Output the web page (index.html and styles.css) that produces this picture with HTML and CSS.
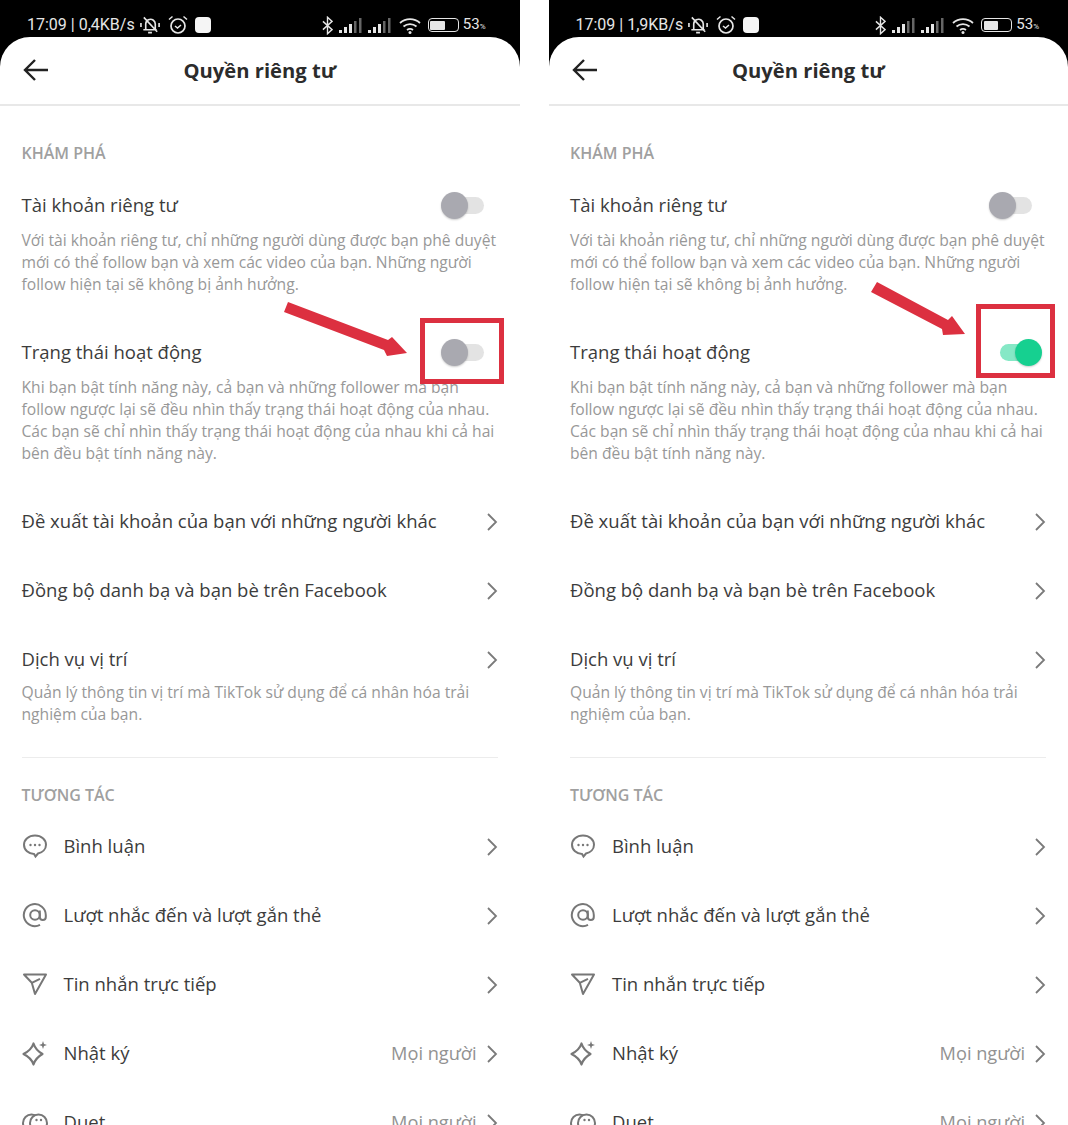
FILE: index.html
```html
<!DOCTYPE html>
<html lang="vi">
<head>
    <meta charset="UTF-8">
    <meta name="viewport" content="width=device-width, initial-scale=1.0">
    <title>Quyền riêng tư</title>
    <link rel="stylesheet" href="styles.css">
</head>
<body>
    <svg class="icon-defs" width="0" height="0">
        <symbol id="i-chevron" viewBox="0 0 12 20"><path d="M2 2l8 8-8 8" fill="none" stroke="#7a7a7a" stroke-width="1.8"/></symbol>
        <symbol id="i-back" viewBox="0 0 26 24"><path d="M25 12H2M12 2L2 12l10 10" fill="none" stroke="#222" stroke-width="2.4"/></symbol>
        <symbol id="i-comment" viewBox="0 0 26 26"><path d="M13 2.500C6.600 2.500 2 6.600 2 11.800S6.600 21 12 21l1.500 2.500 2.500-3c4.600-1 8-4.500 8-8.700C24 6.600 19.400 2.500 13 2.500z" fill="none" stroke="#777" stroke-width="2"/><circle cx="8.500" cy="12" r="1.200" fill="#777"/><circle cx="13" cy="12" r="1.200" fill="#777"/><circle cx="17.500" cy="12" r="1.200" fill="#777"/></symbol>
        <symbol id="i-at" viewBox="0 0 26 26"><circle cx="13" cy="13" r="4.800" fill="none" stroke="#777" stroke-width="2"/><path d="M17.800 8.500v6.500a3 3 0 0 0 6 0v-2A11 11 0 1 0 18 22.800" fill="none" stroke="#777" stroke-width="2"/></symbol>
        <symbol id="i-send" viewBox="0 0 26 24"><path d="M2 2.500h22L13 22 9.800 10.800zM9.800 10.800L18 6.800" fill="none" stroke="#777" stroke-width="2" stroke-linejoin="round"/></symbol>
        <symbol id="i-spark" viewBox="0 0 26 26"><path d="M11.500 3.500Q13.500 10 20.500 14 13.500 18 11.500 24.500 9.500 18 1.500 14 9.500 10 11.500 3.500z" fill="none" stroke="#777" stroke-width="2.200" stroke-linejoin="round"/><path d="M21 1l1 3 3 1-3 1-1 3-1-3-3-1 3-1z" fill="#777"/></symbol>
        <symbol id="i-duet" viewBox="0 0 26 26"><circle cx="9.500" cy="14" r="8.500" fill="none" stroke="#777" stroke-width="2"/><circle cx="16.500" cy="14" r="8.500" fill="#fff" stroke="#777" stroke-width="2"/><circle cx="14.500" cy="11" r="1.200" fill="#777"/><circle cx="19" cy="11" r="1.200" fill="#777"/></symbol>
        <symbol id="i-mute" viewBox="0 0 22 20"><path d="M6 15V9a5 5 0 0 1 8-4 5 5 0 0 1 2 4v6zM3.500 15h14M8.500 18h4M4 2l14 15M1 8v4M20 8v4" fill="none" stroke="#e6e6e6" stroke-width="1.700"/></symbol>
        <symbol id="i-alarm" viewBox="0 0 20 20"><circle cx="10" cy="11" r="7" fill="none" stroke="#e6e6e6" stroke-width="1.700"/><path d="M7 11l2.500 2L13 10M1 4.500L4.500 1.500M19 4.500L15.500 1.500" fill="none" stroke="#e6e6e6" stroke-width="1.500"/></symbol>
        <symbol id="i-bt" viewBox="0 0 12 20"><path d="M1 5.500l10 9L6 19V1l5 4.500-10 9" fill="none" stroke="#e6e6e6" stroke-width="1.500"/></symbol>
        <symbol id="i-signal" viewBox="0 0 23 15"><rect x="0" y="12" width="3" height="3" fill="#e6e6e6"/><rect x="5" y="9" width="3" height="6" fill="#e6e6e6"/><rect x="10" y="6" width="3" height="9" fill="#e6e6e6"/><rect x="15" y="3" width="2.500" height="12" fill="#666"/><rect x="20" y="0" width="2.500" height="15" fill="#666"/></symbol>
        <symbol id="i-wifi" viewBox="0 0 23 17"><path d="M1 6a15 15 0 0 1 20 0M4.500 9.500a10 10 0 0 1 13 0M8 13a5 5 0 0 1 6 0" fill="none" stroke="#e6e6e6" stroke-width="1.800"/><circle cx="11" cy="15.500" r="1.500" fill="#e6e6e6"/></symbol>
    </svg>

    <div class="screens">
        <div class="phone">
            <div class="status-bar">
                <div class="status-group">
                    <span class="status-text">17:09 | 0,4KB/s</span>
                    <svg class="st-mute"><use href="#i-mute"/></svg>
                    <svg class="st-alarm"><use href="#i-alarm"/></svg>
                    <span class="st-square"></span>
                </div>
                <div class="status-group">
                    <svg class="st-bt"><use href="#i-bt"/></svg>
                    <svg class="st-signal"><use href="#i-signal"/></svg>
                    <svg class="st-signal"><use href="#i-signal"/></svg>
                    <svg class="st-wifi"><use href="#i-wifi"/></svg>
                    <span class="st-battery"><span class="st-battery-fill"></span></span>
                    <span class="status-text status-pct">53<small>%</small></span>
                </div>
            </div>
            <div class="sheet">
                <div class="top-bar">
                    <svg class="back-icon"><use href="#i-back"/></svg>
                    <h1>Quyền riêng tư</h1>
                </div>
                <div class="content">
                    <div class="section-title">KHÁM PHÁ</div>
                    <div class="row toggle-row first-row">
                        <span class="row-label">Tài khoản riêng tư</span>
                        <span class="toggle"></span>
                    </div>
                    <p class="desc">Với tài khoản riêng tư, chỉ những người dùng được bạn phê duyệt<br>mới có thể follow bạn và xem các video của bạn. Những người<br>follow hiện tại sẽ không bị ảnh hưởng.</p>
                    <div class="row toggle-row">
                        <span class="row-label">Trạng thái hoạt động</span>
                        <span class="toggle"></span>
                    </div>
                    <p class="desc">Khi bạn bật tính năng này, cả bạn và những follower mà bạn<br>follow ngược lại sẽ đều nhìn thấy trạng thái hoạt động của nhau.<br>Các bạn sẽ chỉ nhìn thấy trạng thái hoạt động của nhau khi cả hai<br>bên đều bật tính năng này.</p>
                    <div class="link-rows">
                        <div class="row">
                            <span class="row-label">Đề xuất tài khoản của bạn với những người khác</span>
                            <svg class="chevron"><use href="#i-chevron"/></svg>
                        </div>
                        <div class="row">
                            <span class="row-label">Đồng bộ danh bạ và bạn bè trên Facebook</span>
                            <svg class="chevron"><use href="#i-chevron"/></svg>
                        </div>
                        <div class="row">
                            <span class="row-label">Dịch vụ vị trí</span>
                            <svg class="chevron"><use href="#i-chevron"/></svg>
                        </div>
                    </div>
                    <p class="desc desc-tight">Quản lý thông tin vị trí mà TikTok sử dụng để cá nhân hóa trải<br>nghiệm của bạn.</p>
                    <div class="divider"></div>
                    <div class="section-title section-title-second">TƯƠNG TÁC</div>
                    <div class="icon-rows">
                        <div class="row">
                            <svg class="row-icon"><use href="#i-comment"/></svg>
                            <span class="row-label">Bình luận</span>
                            <svg class="chevron"><use href="#i-chevron"/></svg>
                        </div>
                        <div class="row">
                            <svg class="row-icon"><use href="#i-at"/></svg>
                            <span class="row-label">Lượt nhắc đến và lượt gắn thẻ</span>
                            <svg class="chevron"><use href="#i-chevron"/></svg>
                        </div>
                        <div class="row">
                            <svg class="row-icon"><use href="#i-send"/></svg>
                            <span class="row-label">Tin nhắn trực tiếp</span>
                            <svg class="chevron"><use href="#i-chevron"/></svg>
                        </div>
                        <div class="row">
                            <svg class="row-icon"><use href="#i-spark"/></svg>
                            <span class="row-label">Nhật ký</span>
                            <span class="row-value">Mọi người</span>
                            <svg class="chevron"><use href="#i-chevron"/></svg>
                        </div>
                        <div class="row">
                            <svg class="row-icon"><use href="#i-duet"/></svg>
                            <span class="row-label">Duet</span>
                            <span class="row-value">Mọi người</span>
                            <svg class="chevron"><use href="#i-chevron"/></svg>
                        </div>
                    </div>
                </div>
            </div>
            <!-- annotations drawn on top of the screenshot -->
            <div class="mark mark-left"></div>
            <svg class="arrow arrow-left" viewBox="0 0 125 55"><path d="M4 0L104 38L108 35L123 51L103 54L100 48L0 10z" fill="#dc3040"/></svg>
        </div>

        <div class="phone">
            <div class="status-bar status-bar-second">
                <div class="status-group">
                    <span class="status-text">17:09 | 1,9KB/s</span>
                    <svg class="st-mute"><use href="#i-mute"/></svg>
                    <svg class="st-alarm"><use href="#i-alarm"/></svg>
                    <span class="st-square"></span>
                </div>
                <div class="status-group">
                    <svg class="st-bt"><use href="#i-bt"/></svg>
                    <svg class="st-signal"><use href="#i-signal"/></svg>
                    <svg class="st-signal"><use href="#i-signal"/></svg>
                    <svg class="st-wifi"><use href="#i-wifi"/></svg>
                    <span class="st-battery"><span class="st-battery-fill"></span></span>
                    <span class="status-text status-pct">53<small>%</small></span>
                </div>
            </div>
            <div class="sheet">
                <div class="top-bar">
                    <svg class="back-icon"><use href="#i-back"/></svg>
                    <h1>Quyền riêng tư</h1>
                </div>
                <div class="content">
                    <div class="section-title">KHÁM PHÁ</div>
                    <div class="row toggle-row first-row">
                        <span class="row-label">Tài khoản riêng tư</span>
                        <span class="toggle"></span>
                    </div>
                    <p class="desc">Với tài khoản riêng tư, chỉ những người dùng được bạn phê duyệt<br>mới có thể follow bạn và xem các video của bạn. Những người<br>follow hiện tại sẽ không bị ảnh hưởng.</p>
                    <div class="row toggle-row">
                        <span class="row-label">Trạng thái hoạt động</span>
                        <span class="toggle toggle-on"></span>
                    </div>
                    <p class="desc">Khi bạn bật tính năng này, cả bạn và những follower mà bạn<br>follow ngược lại sẽ đều nhìn thấy trạng thái hoạt động của nhau.<br>Các bạn sẽ chỉ nhìn thấy trạng thái hoạt động của nhau khi cả hai<br>bên đều bật tính năng này.</p>
                    <div class="link-rows">
                        <div class="row">
                            <span class="row-label">Đề xuất tài khoản của bạn với những người khác</span>
                            <svg class="chevron"><use href="#i-chevron"/></svg>
                        </div>
                        <div class="row">
                            <span class="row-label">Đồng bộ danh bạ và bạn bè trên Facebook</span>
                            <svg class="chevron"><use href="#i-chevron"/></svg>
                        </div>
                        <div class="row">
                            <span class="row-label">Dịch vụ vị trí</span>
                            <svg class="chevron"><use href="#i-chevron"/></svg>
                        </div>
                    </div>
                    <p class="desc desc-tight">Quản lý thông tin vị trí mà TikTok sử dụng để cá nhân hóa trải<br>nghiệm của bạn.</p>
                    <div class="divider"></div>
                    <div class="section-title section-title-second">TƯƠNG TÁC</div>
                    <div class="icon-rows">
                        <div class="row">
                            <svg class="row-icon"><use href="#i-comment"/></svg>
                            <span class="row-label">Bình luận</span>
                            <svg class="chevron"><use href="#i-chevron"/></svg>
                        </div>
                        <div class="row">
                            <svg class="row-icon"><use href="#i-at"/></svg>
                            <span class="row-label">Lượt nhắc đến và lượt gắn thẻ</span>
                            <svg class="chevron"><use href="#i-chevron"/></svg>
                        </div>
                        <div class="row">
                            <svg class="row-icon"><use href="#i-send"/></svg>
                            <span class="row-label">Tin nhắn trực tiếp</span>
                            <svg class="chevron"><use href="#i-chevron"/></svg>
                        </div>
                        <div class="row">
                            <svg class="row-icon"><use href="#i-spark"/></svg>
                            <span class="row-label">Nhật ký</span>
                            <span class="row-value">Mọi người</span>
                            <svg class="chevron"><use href="#i-chevron"/></svg>
                        </div>
                        <div class="row">
                            <svg class="row-icon"><use href="#i-duet"/></svg>
                            <span class="row-label">Duet</span>
                            <span class="row-value">Mọi người</span>
                            <svg class="chevron"><use href="#i-chevron"/></svg>
                        </div>
                    </div>
                </div>
            </div>
            <div class="mark mark-right"></div>
            <svg class="arrow arrow-right" viewBox="0 0 96 54"><path d="M6 0L77 38L81 34L94 52L72 53L71 47L0 10z" fill="#dc3040"/></svg>
        </div>
    </div>
</body>
</html>
```

FILE: styles.css
```css
html, body {
    margin: 0;
    padding: 0;
    height: 100%;
    background-color: #fff;
    overflow: hidden;
}

body {
    font-family: "Open Sans", "Noto Sans", sans-serif;
    color: #3c3c3c;
}

.icon-defs {
    position: absolute;
}

.screens {
    display: flex;
    gap: 29px;
    height: 1125px;
}

.phone {
    position: relative;
    width: 520px;
    height: 1125px;
    overflow: hidden;
    background-color: #000;
}

/* status bar */
.status-bar {
    height: 37px;
    box-sizing: border-box;
    padding: 13px 34px 0 27px;
    display: flex;
    justify-content: space-between;
    align-items: center;
    color: #e6e6e6;
}

.status-bar-second {
    padding-right: 29px;
}

.status-group {
    display: flex;
    align-items: center;
}

.status-text {
    font-family: Roboto, sans-serif;
    font-size: 16px;
    line-height: 20px;
    white-space: nowrap;
}

.status-pct {
    font-size: 15px;
}

.status-text small {
    font-size: 8px;
}

.st-mute {
    width: 21px;
    height: 20px;
    margin-left: 5px;
}

.st-alarm {
    width: 20px;
    height: 20px;
    margin-left: 7px;
}

.st-square {
    width: 16px;
    height: 16px;
    border-radius: 4px;
    background-color: #f5f5f5;
    margin-left: 7px;
}

.st-bt {
    width: 11px;
    height: 19px;
}

.st-signal {
    width: 23px;
    height: 15px;
    margin-left: 6px;
}

.st-wifi {
    width: 23px;
    height: 17px;
    margin-left: 8px;
}

.st-battery {
    width: 31px;
    height: 14px;
    box-sizing: border-box;
    border: 1.5px solid #e6e6e6;
    border-radius: 4px;
    padding: 1.500px;
    margin-left: 6px;
    margin-right: 4px;
    display: flex;
}

.st-battery-fill {
    width: 55%;
    background-color: #e6e6e6;
    border-radius: 1px;
}

/* white sheet */
.sheet {
    background-color: #fff;
    border-radius: 30px 30px 0 0;
    height: 1088px;
}

.top-bar {
    position: relative;
    box-sizing: border-box;
    height: 69px;
    padding-bottom: 2px;
    border-bottom: 2px solid #e8e8e8;
    display: flex;
    align-items: center;
    justify-content: center;
}

.top-bar h1 {
    margin: 0;
    font-size: 20.200px;
    font-weight: 700;
    color: #2c2c2c;
}

.back-icon {
    position: absolute;
    left: 23px;
    top: 21px;
    width: 26px;
    height: 24px;
}

.content {
    padding: 0 22px 0 21.500px;
}

.section-title {
    font-size: 16px;
    font-weight: 600;
    color: #a0a0a0;
    line-height: 22px;
    padding-top: 36px;
}

.section-title-second {
    padding-top: 26px;
}

.row {
    display: flex;
    align-items: center;
    min-height: 69px;
}

.toggle-row {
    min-height: 28px;
    margin-top: 42px;
}

.first-row {
    margin-top: 26px;
}

.row-label {
    flex-grow: 1;
    font-size: 18.500px;
    white-space: nowrap;
}

.row-value {
    font-size: 18.200px;
    color: #929292;
    margin-right: 9px;
}

.chevron {
    width: 12px;
    height: 20px;
    margin-top: 3px;
    flex-shrink: 0;
}

.desc {
    margin: 11px 0 0;
    font-size: 15.650px;
    line-height: 22px;
    color: #989898;
    white-space: nowrap;
}

.link-rows {
    margin-top: 22px;
}

.desc-tight {
    margin-top: -12px;
}

.divider {
    height: 1px;
    background-color: #ececec;
    margin-top: 32px;
}

.icon-rows {
    margin-top: 5px;
}

.row-icon {
    width: 26px;
    height: 26px;
    margin-right: 16px;
    flex-shrink: 0;
}

/* toggles */
.toggle {
    position: relative;
    width: 42px;
    height: 17px;
    margin-top: 3px;
    margin-right: 14px;
    border-radius: 9px;
    background-color: #e3e3e3;
    flex-shrink: 0;
}

.toggle::after {
    content: "";
    position: absolute;
    left: -1px;
    top: -5px;
    width: 27px;
    height: 27px;
    border-radius: 50%;
    background-color: #a9a9b0;
    box-shadow: 0 1px 2px rgba(0, 0, 0, 0.2);
}

.toggle-on {
    width: 40px;
    background-color: #86e8c6;
    margin-right: 6px;
}

.toggle-on::after {
    left: auto;
    right: -2px;
    background-color: #16d090;
}

/* red annotations */
.mark {
    position: absolute;
    box-sizing: border-box;
    border: 5px solid #dc3040;
}

.mark-left {
    left: 420px;
    top: 318px;
    width: 84px;
    height: 66px;
}

.mark-right {
    left: 427px;
    top: 304px;
    width: 79px;
    height: 74px;
}

.arrow {
    position: absolute;
}

.arrow-left {
    left: 284px;
    top: 302px;
    width: 125px;
    height: 55px;
}

.arrow-right {
    left: 322px;
    top: 282px;
    width: 96px;
    height: 54px;
}
```
